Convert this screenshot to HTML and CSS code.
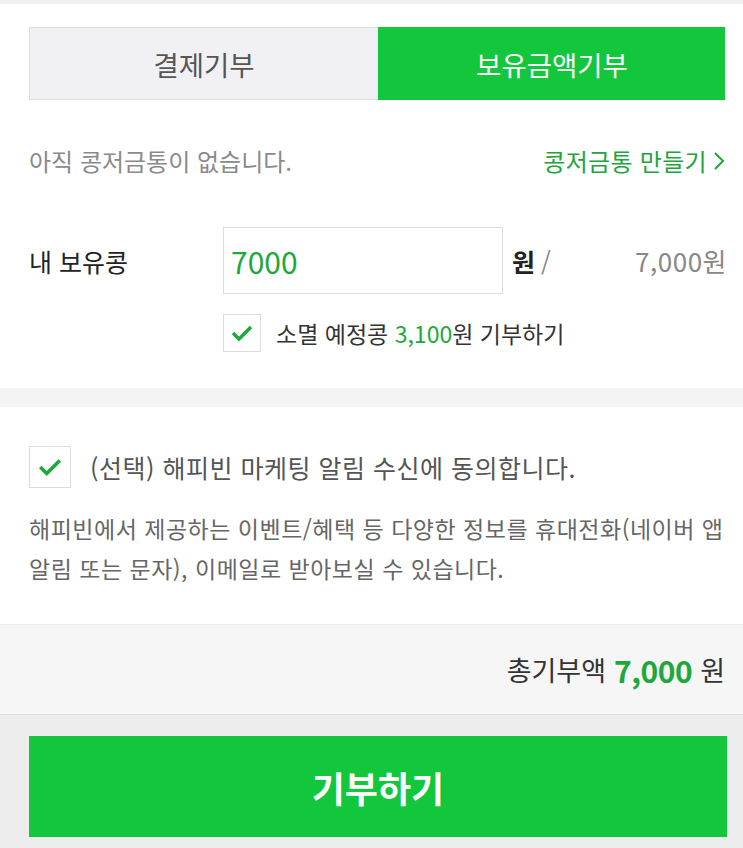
FILE: index.html
```html
<!DOCTYPE html>
<html lang="ko">
<head>
  <meta charset="UTF-8">
  <meta name="viewport" content="width=device-width, initial-scale=1.0">
  <title>보유금액기부</title>
  <link rel="stylesheet" href="styles.css">
</head>
<body>
  <div class="top-strip"></div>
  <section class="donate">
    <div class="tabs">
      <div class="tab">결제기부</div>
      <div class="tab active">보유금액기부</div>
    </div>
    <div class="piggy">
      <span class="piggy-empty">아직 콩저금통이 없습니다.</span>
      <a class="piggy-make" href="#">콩저금통 만들기
        <svg class="chev" width="12" height="20" viewBox="0 0 12 20"><path d="M2 2l8 8-8 8" fill="none" stroke="#22a33d" stroke-width="2"/></svg>
      </a>
    </div>
    <div class="bean-row">
      <div class="bean-label">내 보유콩</div>
      <input class="bean-input" type="text" value="7000">
      <span class="won">원</span>
      <span class="slash">/</span>
      <span class="bean-total">7,000원</span>
    </div>
    <label class="check-row expire">
      <span class="box">
        <svg width="24" height="20" viewBox="0 0 24 20"><path d="M3 10l6 6L21 4" fill="none" stroke="#1ea83b" stroke-width="3.4"/></svg>
      </span>
      <span>소멸 예정콩 <em>3,100</em>원 기부하기</span>
    </label>
  </section>
  <div class="band"></div>
  <section class="agree">
    <label class="check-row">
      <span class="box big">
        <svg width="26" height="22" viewBox="0 0 24 20"><path d="M3 10l6 6L21 4" fill="none" stroke="#1ea83b" stroke-width="3.4"/></svg>
      </span>
      <span class="agree-text">(선택) 해피빈 마케팅 알림 수신에 동의합니다.</span>
    </label>
    <p class="agree-desc">해피빈에서 제공하는 이벤트/혜택 등 다양한 정보를 휴대전화(네이버 앱 알림 또는 문자), 이메일로 받아보실 수 있습니다.</p>
  </section>
  <div class="total">총기부액 <strong>7,000</strong> 원</div>
  <div class="submit-area">
    <button class="submit" type="button">기부하기</button>
  </div>
</body>
</html>
```

FILE: styles.css
```css
body {
  font-family: "Noto Sans CJK KR", "Noto Sans", sans-serif;
  margin: 0;
  padding: 0;
  background-color: #ededed;
  color: #222;
}
.top-strip {
  height: 4px;
  background-color: #eef0f2;
}
.donate {
  background-color: #fff;
  padding: 23px 18px 36px 29px;
}
.tabs {
  display: grid;
  grid-template-columns: 349px 1fr;
  height: 73px;
}
.tab {
  display: flex;
  align-items: center;
  justify-content: center;
  font-size: 27.5px;
  color: #555;
  background-color: #f1f1f5;
  border: 1px solid #dedee2;
  border-right: 0;
}
.tab.active {
  color: #fff;
  background-color: #12c73b;
  border-color: #12c73b;
}
.piggy {
  display: flex;
  align-items: center;
  justify-content: space-between;
  margin-top: 43px;
  line-height: 36px;
  font-size: 24px;
}
.piggy-empty {
  color: #8a8a8a;
}
.piggy-make {
  color: #22a33d;
  text-decoration: none;
  display: flex;
  align-items: center;
  gap: 6px;
  letter-spacing: 0.3px;
}
.bean-row {
  display: flex;
  align-items: center;
  margin-top: 48px;
}
.bean-label {
  width: 194px;
  font-size: 25px;
  color: #222;
}
.bean-input {
  width: 280px;
  height: 67px;
  box-sizing: border-box;
  border: 1px solid #dcdcdc;
  padding: 0 0 0 7px;
  font-family: inherit;
  font-size: 30px;
  color: #1ea83b;
  outline: none;
}
.won {
  margin-left: 9px;
  font-size: 25px;
  font-weight: bold;
  color: #222;
}
.slash {
  margin-left: 6px;
  font-size: 25px;
  color: #888;
}
.bean-total {
  margin-left: auto;
  margin-right: -2px;
  font-size: 26px;
  letter-spacing: 0.5px;
  color: #888;
}
.check-row {
  display: flex;
  align-items: center;
  gap: 15px;
  font-size: 23px;
  color: #333;
}
.check-row em {
  font-style: normal;
  color: #1ea83b;
}
.expire {
  margin: 20px 0 0 194px;
}
.box {
  width: 38px;
  height: 38px;
  box-sizing: border-box;
  border: 1px solid #dcdcdc;
  background-color: #fff;
  display: flex;
  align-items: center;
  justify-content: center;
}
.box.big {
  width: 42px;
  height: 42px;
}
.band {
  height: 19px;
  background-color: #f4f4f4;
}
.agree {
  background-color: #fff;
  padding: 39px 14px 36px 29px;
  border-bottom: 1px solid #ececec;
}
.agree .check-row {
  gap: 19px;
}
.agree-text {
  font-size: 25px;
  letter-spacing: 0.5px;
  color: #555;
}
.agree-desc {
  margin: 20px 0 0;
  font-size: 23px;
  line-height: 40px;
  letter-spacing: 0.5px;
  color: #666;
}
.total {
  background-color: #f6f6f6;
  border-bottom: 1px solid #dedede;
  height: 90px;
  box-sizing: border-box;
  padding-right: 18px;
  display: flex;
  align-items: center;
  justify-content: flex-end;
  gap: 8px;
  font-size: 27px;
  color: #333;
}
.total strong {
  color: #1ea83b;
  font-size: 30px;
  letter-spacing: -0.5px;
}
.submit-area {
  padding: 21px 16px 11px 29px;
}
.submit {
  display: block;
  width: 100%;
  height: 101px;
  border: 0;
  background-color: #12c73b;
  color: #fff;
  font-family: inherit;
  font-size: 36px;
  font-weight: bold;
}
```
